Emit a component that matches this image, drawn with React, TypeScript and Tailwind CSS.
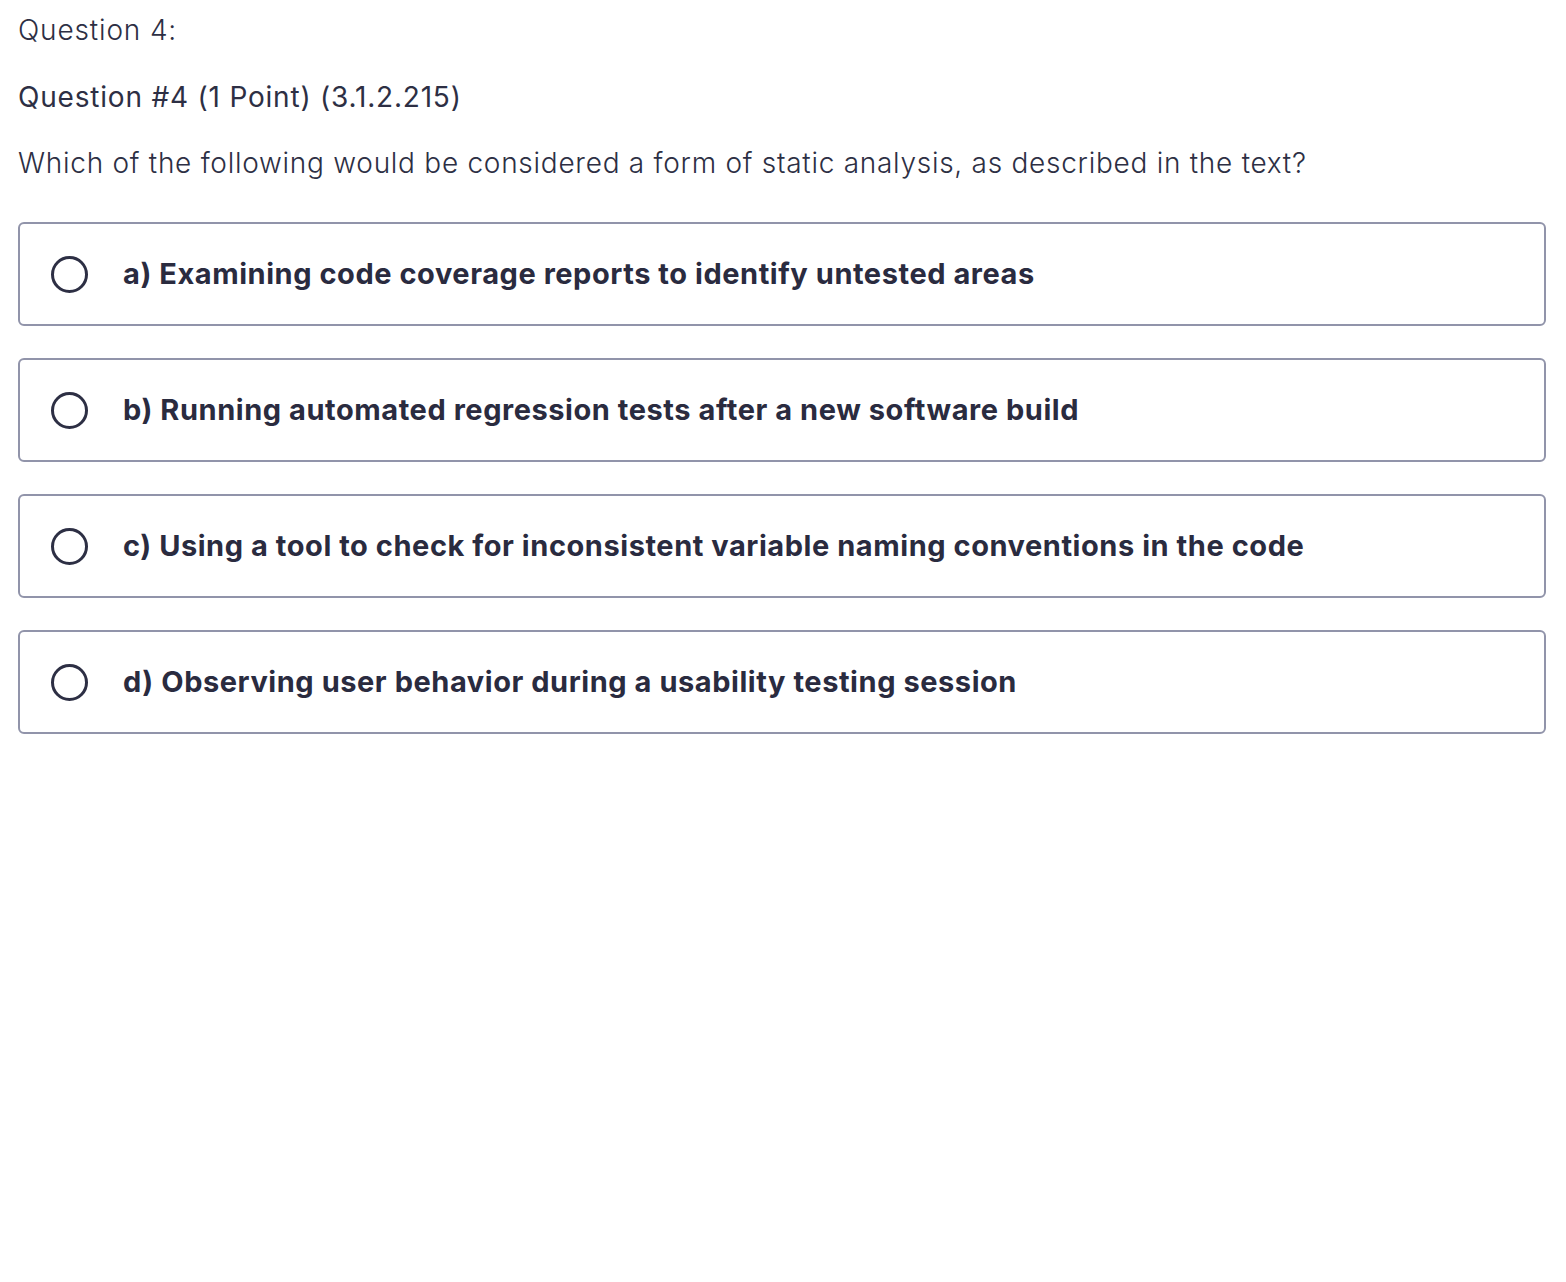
import React, { FC } from "react";

const options: string[] = [
  "a) Examining code coverage reports to identify untested areas",
  "b) Running automated regression tests after a new software build",
  "c) Using a tool to check for inconsistent variable naming conventions in the code",
  "d) Observing user behavior during a usability testing session",
];

const Option: FC<{ label: string }> = ({ label }) => (
  <label className="flex items-center h-[104px] border-2 border-[#9194aa] rounded-[6px] pl-[31px] cursor-pointer">
    <span className="w-[37px] h-[37px] rounded-full border-[3px] border-[#2d2f44] shrink-0" />
    <span className="ml-[35px] text-[29px] font-bold text-[#2a2b3f] tracking-[0.55px]">{label}</span>
  </label>
);

const App: FC = () => {
  return (
    <div className="min-h-[1282px] bg-white px-[18px] pt-[10px] font-['Inter',sans-serif] text-[#2d2f44]">
      <p className="text-[28px] font-light leading-[40px] tracking-[0.85px]">Question 4:</p>
      <p className="mt-[27px] text-[28px] font-normal leading-[40px] tracking-[0.8px]">
        Question #4 (1 Point) (3.1.2.215)
      </p>
      <p className="mt-[26px] text-[28px] font-light leading-[40px] tracking-[0.73px]">
        Which of the following would be considered a form of static analysis, as described in the text?
      </p>
      <div className="mt-[39px] mr-[2px] flex flex-col gap-[32px]">
        {options.map((o) => (
          <Option key={o} label={o} />
        ))}
      </div>
    </div>
  );
};

export default App;
